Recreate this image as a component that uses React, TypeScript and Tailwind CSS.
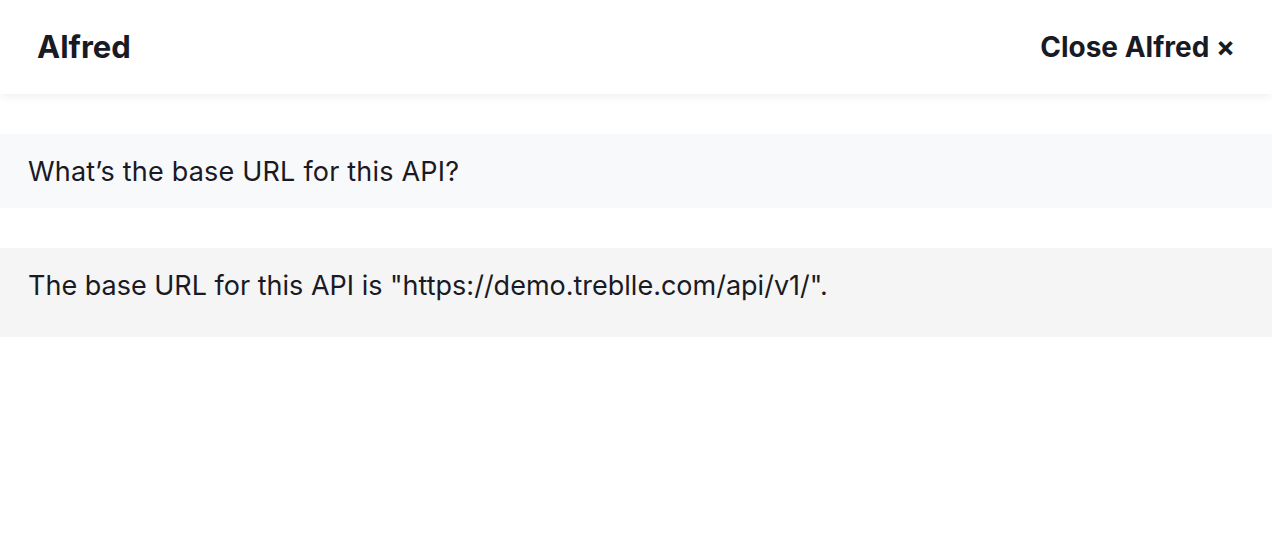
import React from 'react';

const App: React.FC = () => {
  return (
    <div className="min-h-screen bg-white text-[#1a1a24]" style={{ fontFamily: 'Inter, "Noto Sans", sans-serif' }}>
      {/* Header */}
      <header className="h-[94px] flex items-center justify-between px-[37px] bg-white shadow-[0_2px_10px_rgba(0,0,0,0.07)]">
        <h1 className="text-[31px] font-bold">Alfred</h1>
        <button className="text-[28px] font-bold">Close Alfred ×</button>
      </header>

      {/* Conversation */}
      <div className="pt-[40px]">
        <div className="bg-[#f8f9fb] h-[74px] flex items-center px-[28px] pt-[2px]">
          <p className="text-[27px] tracking-[0.2px]">What’s the base URL for this API?</p>
        </div>
        <div className="mt-[40px] bg-[#f5f5f5] pt-[19px] pb-[32px] px-[28px]">
          <p className="text-[27px] leading-[38px]">The base URL for this API is "https://demo.treblle.com/api/v1/".</p>
        </div>
      </div>
    </div>
  );
};

export default App;
